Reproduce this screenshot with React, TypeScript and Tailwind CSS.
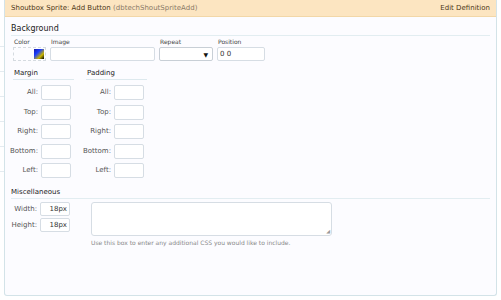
import React from "react";

const font = { fontFamily: '"DejaVu Sans", "Liberation Sans", sans-serif' };

function SpacingBox({ title }: { title: string }) {
  const rows = ["All:", "Top:", "Right:", "Bottom:", "Left:"];
  return (
    <div className="w-[61px]">
      <div className="border-b border-[#dde9ee] pb-[1px] pl-[1px] text-[7px] leading-[9px] text-[#222]">{title}</div>
      <div className="mt-[5px] flex flex-col gap-[4.5px]">
        {rows.map((r) => (
          <div key={r} className="flex items-center gap-[3px]">
            <span className="flex w-[25px] justify-end whitespace-nowrap text-[7px] leading-[9px] text-[#555]">{r}</span>
            <div className="h-[15px] w-[30px] rounded-[2px] border border-[#d6dde4] bg-white" />
          </div>
        ))}
      </div>
    </div>
  );
}

export default function App() {
  return (
    <div className="flex h-[300px] w-[501px] bg-white" style={font}>
      <div className="flex w-[4px] flex-col pt-[46px]">
        {[0, 1, 2, 3, 4, 5].map((i) => (
          <div key={i} className="h-[25px] border-t border-[#e4ebf0]" />
        ))}
      </div>
      <div className="mb-[4px] mr-[4px] flex flex-1 flex-col overflow-hidden rounded-b-[3px] border border-t-0 border-[#d3e3e8] bg-[#fcfcff]">
        <div className="flex h-[17px] items-center justify-between border-b border-[#f2d7a8] bg-[#fce5c1] px-[6px] text-[7px] text-[#4e3818]">
          <span>
            Shoutbox Sprite: Add Button <span className="text-[#8a7a68]">(dbtechShoutSpriteAdd)</span>
          </span>
          <span>Edit Definition</span>
        </div>

        <div className="px-[6px] pt-[7px]">
          <div className="border-b border-[#e2edf1] pb-[1px] text-[8px] leading-[10px] text-[#222]">Background</div>

          <div className="mt-[2px] flex gap-[4px] pl-[2px]">
            <div className="flex flex-col">
              <span className="pl-[1px] text-[6px] leading-[8px] text-[#444]">Color</span>
              <div className="mt-[1px] flex h-[14px] w-[33px] items-center justify-end border border-dashed border-[#d5dbe0] pr-[1px]">
                <div className="h-[10px] w-[10px] bg-[linear-gradient(135deg,#1a1aa0_0%,#1a3cff_35%,#c8b400_70%,#000_100%)]" />
              </div>
            </div>
            <div className="flex flex-col">
              <span className="pl-[1px] text-[6px] leading-[8px] text-[#444]">Image</span>
              <div className="mt-[1px] h-[14px] w-[105px] rounded-[2px] border border-[#d6dde4] bg-white" />
            </div>
            <div className="flex flex-col">
              <span className="pl-[1px] text-[6px] leading-[8px] text-[#444]">Repeat</span>
              <div className="mt-[1px] flex h-[14px] w-[54px] items-center justify-end rounded-[2px] border border-[#c8cfd6] bg-white pr-[4px] text-[6px] text-[#111]">
                ▼
              </div>
            </div>
            <div className="flex flex-col">
              <span className="pl-[1px] text-[6px] leading-[8px] text-[#444]">Position</span>
              <div className="mt-[1px] flex h-[14px] w-[48px] items-center rounded-[2px] border border-[#d6dde4] bg-white pl-[2px] text-[7px] text-[#333]">
                0 0
              </div>
            </div>
          </div>

          <div className="mt-[8px] flex gap-[12px] pl-[2px]">
            <SpacingBox title="Margin" />
            <SpacingBox title="Padding" />
          </div>

          <div className="mt-[10px] border-b border-[#e2edf1] pb-[1px] text-[7px] leading-[9px] text-[#222]">Miscellaneous</div>

          <div className="mt-[3px] flex gap-[21px]">
            <div className="flex flex-col gap-[2px]">
              {["Width:", "Height:"].map((l) => (
                <div key={l} className="flex items-center gap-[3px]">
                  <span className="w-[26px] text-right text-[7px] leading-[9px] text-[#555]">{l}</span>
                  <div className="flex h-[14px] w-[30px] items-center justify-end rounded-[2px] border border-[#d6dde4] bg-white pr-[2px] text-[7px] text-[#333]">
                    18px
                  </div>
                </div>
              ))}
            </div>
            <div className="flex flex-col">
              <div className="relative h-[34px] w-[241px] rounded-[3px] border border-[#d6dde4] bg-white">
                <span className="absolute bottom-[1px] right-[1px] text-[5px] leading-none text-[#999]">◢</span>
              </div>
              <span className="mt-[3px] text-[6px] leading-[8px] text-[#888]">
                Use this box to enter any additional CSS you would like to include.
              </span>
            </div>
          </div>
        </div>
      </div>
    </div>
  );
}
